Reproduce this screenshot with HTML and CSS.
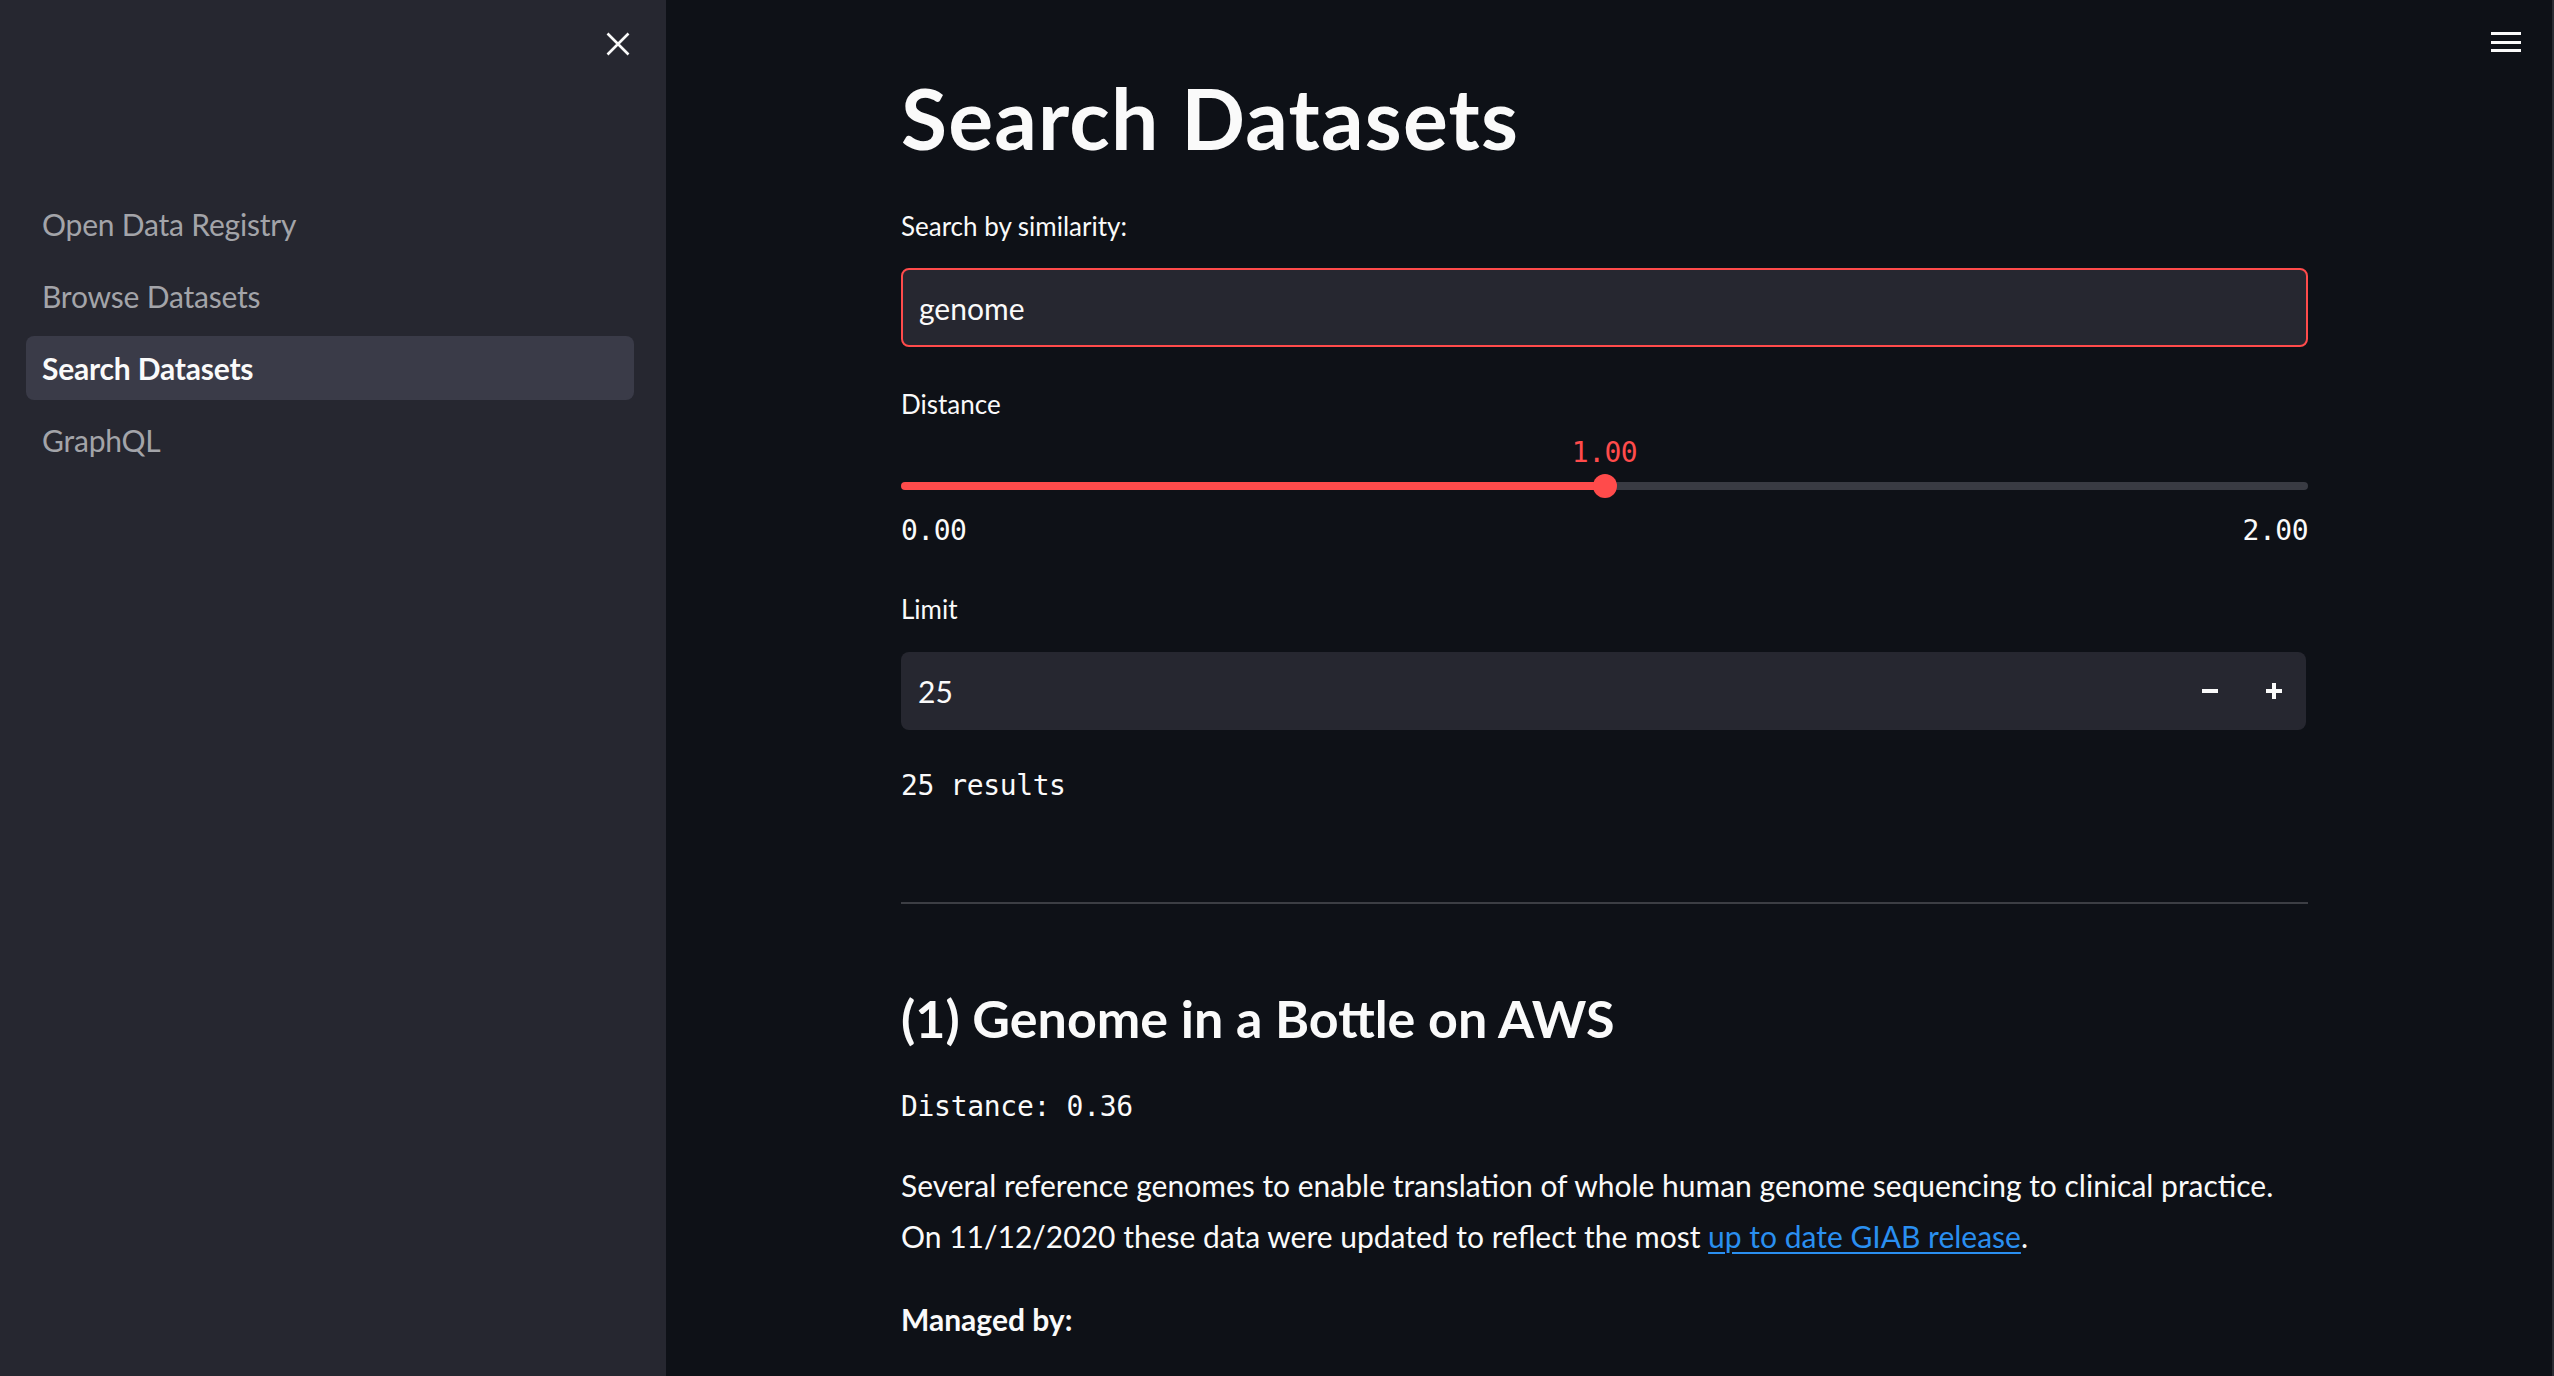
FILE: index.html
```html
<!DOCTYPE html>
<html lang="en">
<head>
<meta charset="utf-8">
<title>Search Datasets</title>
<link rel="stylesheet" href="styles.css">
</head>
<body>
<div class="app">
  <aside class="sidebar">
    <div class="sidebar-header">
      <button class="close-btn" aria-label="Close sidebar">
        <svg width="24" height="24" viewBox="0 0 24 24"><path d="M1.5 1.5 L22.5 22.5 M22.5 1.5 L1.5 22.5" stroke="#fafafa" stroke-width="2.6" fill="none"/></svg>
      </button>
    </div>
    <nav class="nav">
      <a class="nav-item">Open Data Registry</a>
      <a class="nav-item">Browse Datasets</a>
      <a class="nav-item active">Search Datasets</a>
      <a class="nav-item">GraphQL</a>
    </nav>
  </aside>
  <main class="main">
    <button class="menu-btn" aria-label="Menu">
      <span class="bar"></span><span class="bar"></span><span class="bar"></span>
    </button>
    <div class="block">
      <h1 class="title">Search Datasets</h1>

      <label class="label">Search by similarity:</label>
      <div class="text-input">genome</div>

      <label class="label label-distance">Distance</label>
      <div class="slider">
        <div class="slider-value-row"><span class="slider-value">1.00</span></div>
        <div class="slider-track-row">
          <div class="track">
            <div class="track-fill"></div>
            <div class="thumb"></div>
            <div class="track-rest"></div>
          </div>
        </div>
        <div class="slider-ticks"><span>0.00</span><span>2.00</span></div>
      </div>

      <label class="label label-limit">Limit</label>
      <div class="number-input">
        <span class="number-value">25</span>
        <div class="step-btns">
          <span class="step-btn"><span class="minus"></span></span>
          <span class="step-btn"><span class="plus"></span></span>
        </div>
      </div>

      <div class="mono results">25 results</div>

      <hr class="divider">

      <h3 class="ds-title">(1) Genome in a Bottle on AWS</h3>
      <div class="mono ds-distance">Distance: 0.36</div>
      <p class="ds-desc">Several reference genomes to enable translation of whole human genome sequencing to clinical practice.<br>On 11/12/2020 these data were updated to reflect the most <a class="link">up to date GIAB release</a>.</p>
      <p class="managed">Managed by:</p>
    </div>
  </main>
</div>
</body>
</html>
```

FILE: styles.css
```css
* { box-sizing: border-box; }
html, body {
  margin: 0;
  padding: 0;
  height: 100%;
}
body {
  background: #0e1117;
  color: #fafafa;
  font-family: "Source Sans Pro", Lato, "Noto Sans", sans-serif;
  overflow: hidden;
}
.app {
  display: flex;
  height: 1376px;
}

/* Sidebar */
.sidebar {
  width: 666px;
  flex: 0 0 666px;
  background: #262730;
  padding: 0 32px 0 26px;
}
.sidebar-header {
  height: 88px;
  display: flex;
  justify-content: flex-end;
  align-items: center;
  padding-right: 4px;
}
.close-btn {
  background: none;
  border: none;
  padding: 0;
  width: 24px;
  height: 24px;
  display: flex;
}
.nav {
  margin-top: 104px;
  display: flex;
  flex-direction: column;
  gap: 8px;
}
.nav-item {
  height: 64px;
  display: flex;
  align-items: center;
  padding-left: 16px;
  border-radius: 8px;
  font-size: 30px;
  color: #a3a4a9;
  letter-spacing: -0.2px;
}
.nav-item.active {
  background: #3a3b48;
  color: #fafafa;
  font-weight: 700;
}

/* Main */
.main {
  flex: 1;
  position: relative;
  padding-top: 65px;
  padding-left: 235px;
  border-right: 2px solid #2a2c33;
}
.menu-btn {
  position: absolute;
  top: 32px;
  right: 31px;
  width: 30px;
  height: 20px;
  padding: 0;
  background: none;
  border: none;
  display: flex;
  flex-direction: column;
  justify-content: space-between;
}
.menu-btn .bar {
  display: block;
  height: 3px;
  width: 30px;
  background: #fafafa;
}
.block {
  width: 1407px;
}
.title {
  margin: 0;
  font-size: 84px;
  line-height: 106px;
  font-weight: 700;
  letter-spacing: 1.2px;
}
.label {
  display: block;
  font-size: 26px;
  line-height: 40px;
  margin-top: 35px;
  margin-bottom: 22px;
}
.text-input {
  height: 79px;
  border: 2px solid #ff4b4b;
  border-radius: 8px;
  background: #262730;
  font-size: 30px;
  display: flex;
  align-items: center;
  padding-left: 16px;
}
.label-distance {
  margin-top: 37px;
  margin-bottom: 11px;
}
.mono, .slider-value, .slider-ticks {
  font-family: "DejaVu Sans Mono", "Liberation Mono", monospace;
  font-size: 28px;
  line-height: 36px;
}
.slider-value-row {
  position: relative;
  height: 36px;
}
.slider-value {
  position: absolute;
  left: 50%;
  transform: translateX(-50%);
  color: #ff4b4b;
  letter-spacing: -0.5px;
}
.slider-track-row {
  height: 30px;
  display: flex;
  align-items: center;
}
.track {
  width: 100%;
  height: 8px;
  display: flex;
  align-items: center;
}
.track-fill {
  flex: 1;
  height: 8px;
  background: #ff4b4b;
  border-radius: 4px 0 0 4px;
}
.thumb {
  width: 24px;
  height: 24px;
  border-radius: 50%;
  background: #ff4b4b;
  margin: 0 -12px;
  position: relative;
  z-index: 1;
}
.track-rest {
  flex: 1;
  height: 8px;
  background: #393b43;
  border-radius: 0 4px 4px 0;
}
.slider-ticks {
  margin-top: 12px;
  display: flex;
  justify-content: space-between;
  letter-spacing: -0.5px;
}
.label-limit {
  margin-top: 40px;
  margin-bottom: 23px;
}
.number-input {
  height: 78px;
  width: 1405px;
  border-radius: 8px;
  background: #262730;
  display: flex;
  align-items: center;
  justify-content: space-between;
  padding-left: 17px;
}
.number-value {
  font-size: 30px;
}
.step-btns {
  display: flex;
  height: 100%;
}
.step-btn {
  width: 64px;
  height: 100%;
  display: flex;
  align-items: center;
  justify-content: center;
  position: relative;
}
.minus {
  width: 16px;
  height: 4px;
  background: #fafafa;
}
.plus {
  width: 16px;
  height: 16px;
  position: relative;
  display: block;
}
.plus::before, .plus::after {
  content: "";
  position: absolute;
  background: #fafafa;
}
.plus::before {
  left: 0; right: 0; top: 6px; height: 4px;
}
.plus::after {
  top: 0; bottom: 0; left: 6px; width: 4px;
}
.results {
  margin-top: 38px;
  letter-spacing: -0.4px;
}
.divider {
  margin: 98px 0 0 0;
  border: none;
  height: 2px;
  background: #3c3e44;
}
.ds-title {
  margin: 82px 0 0 0;
  font-size: 52px;
  line-height: 64px;
  font-weight: 700;
  letter-spacing: 0;
}
.ds-distance {
  margin-top: 39px;
  letter-spacing: -0.3px;
}
.ds-desc {
  margin: 35px 0 0 0;
  font-size: 30px;
  line-height: 51px;
  letter-spacing: 0;
}
.link {
  color: #2a8ff0;
  text-decoration: underline;
  text-decoration-thickness: 2px;
  text-underline-offset: 4px;
}
.managed {
  margin: 32px 0 0 0;
  font-size: 30px;
  line-height: 51px;
  font-weight: 700;
}
```
